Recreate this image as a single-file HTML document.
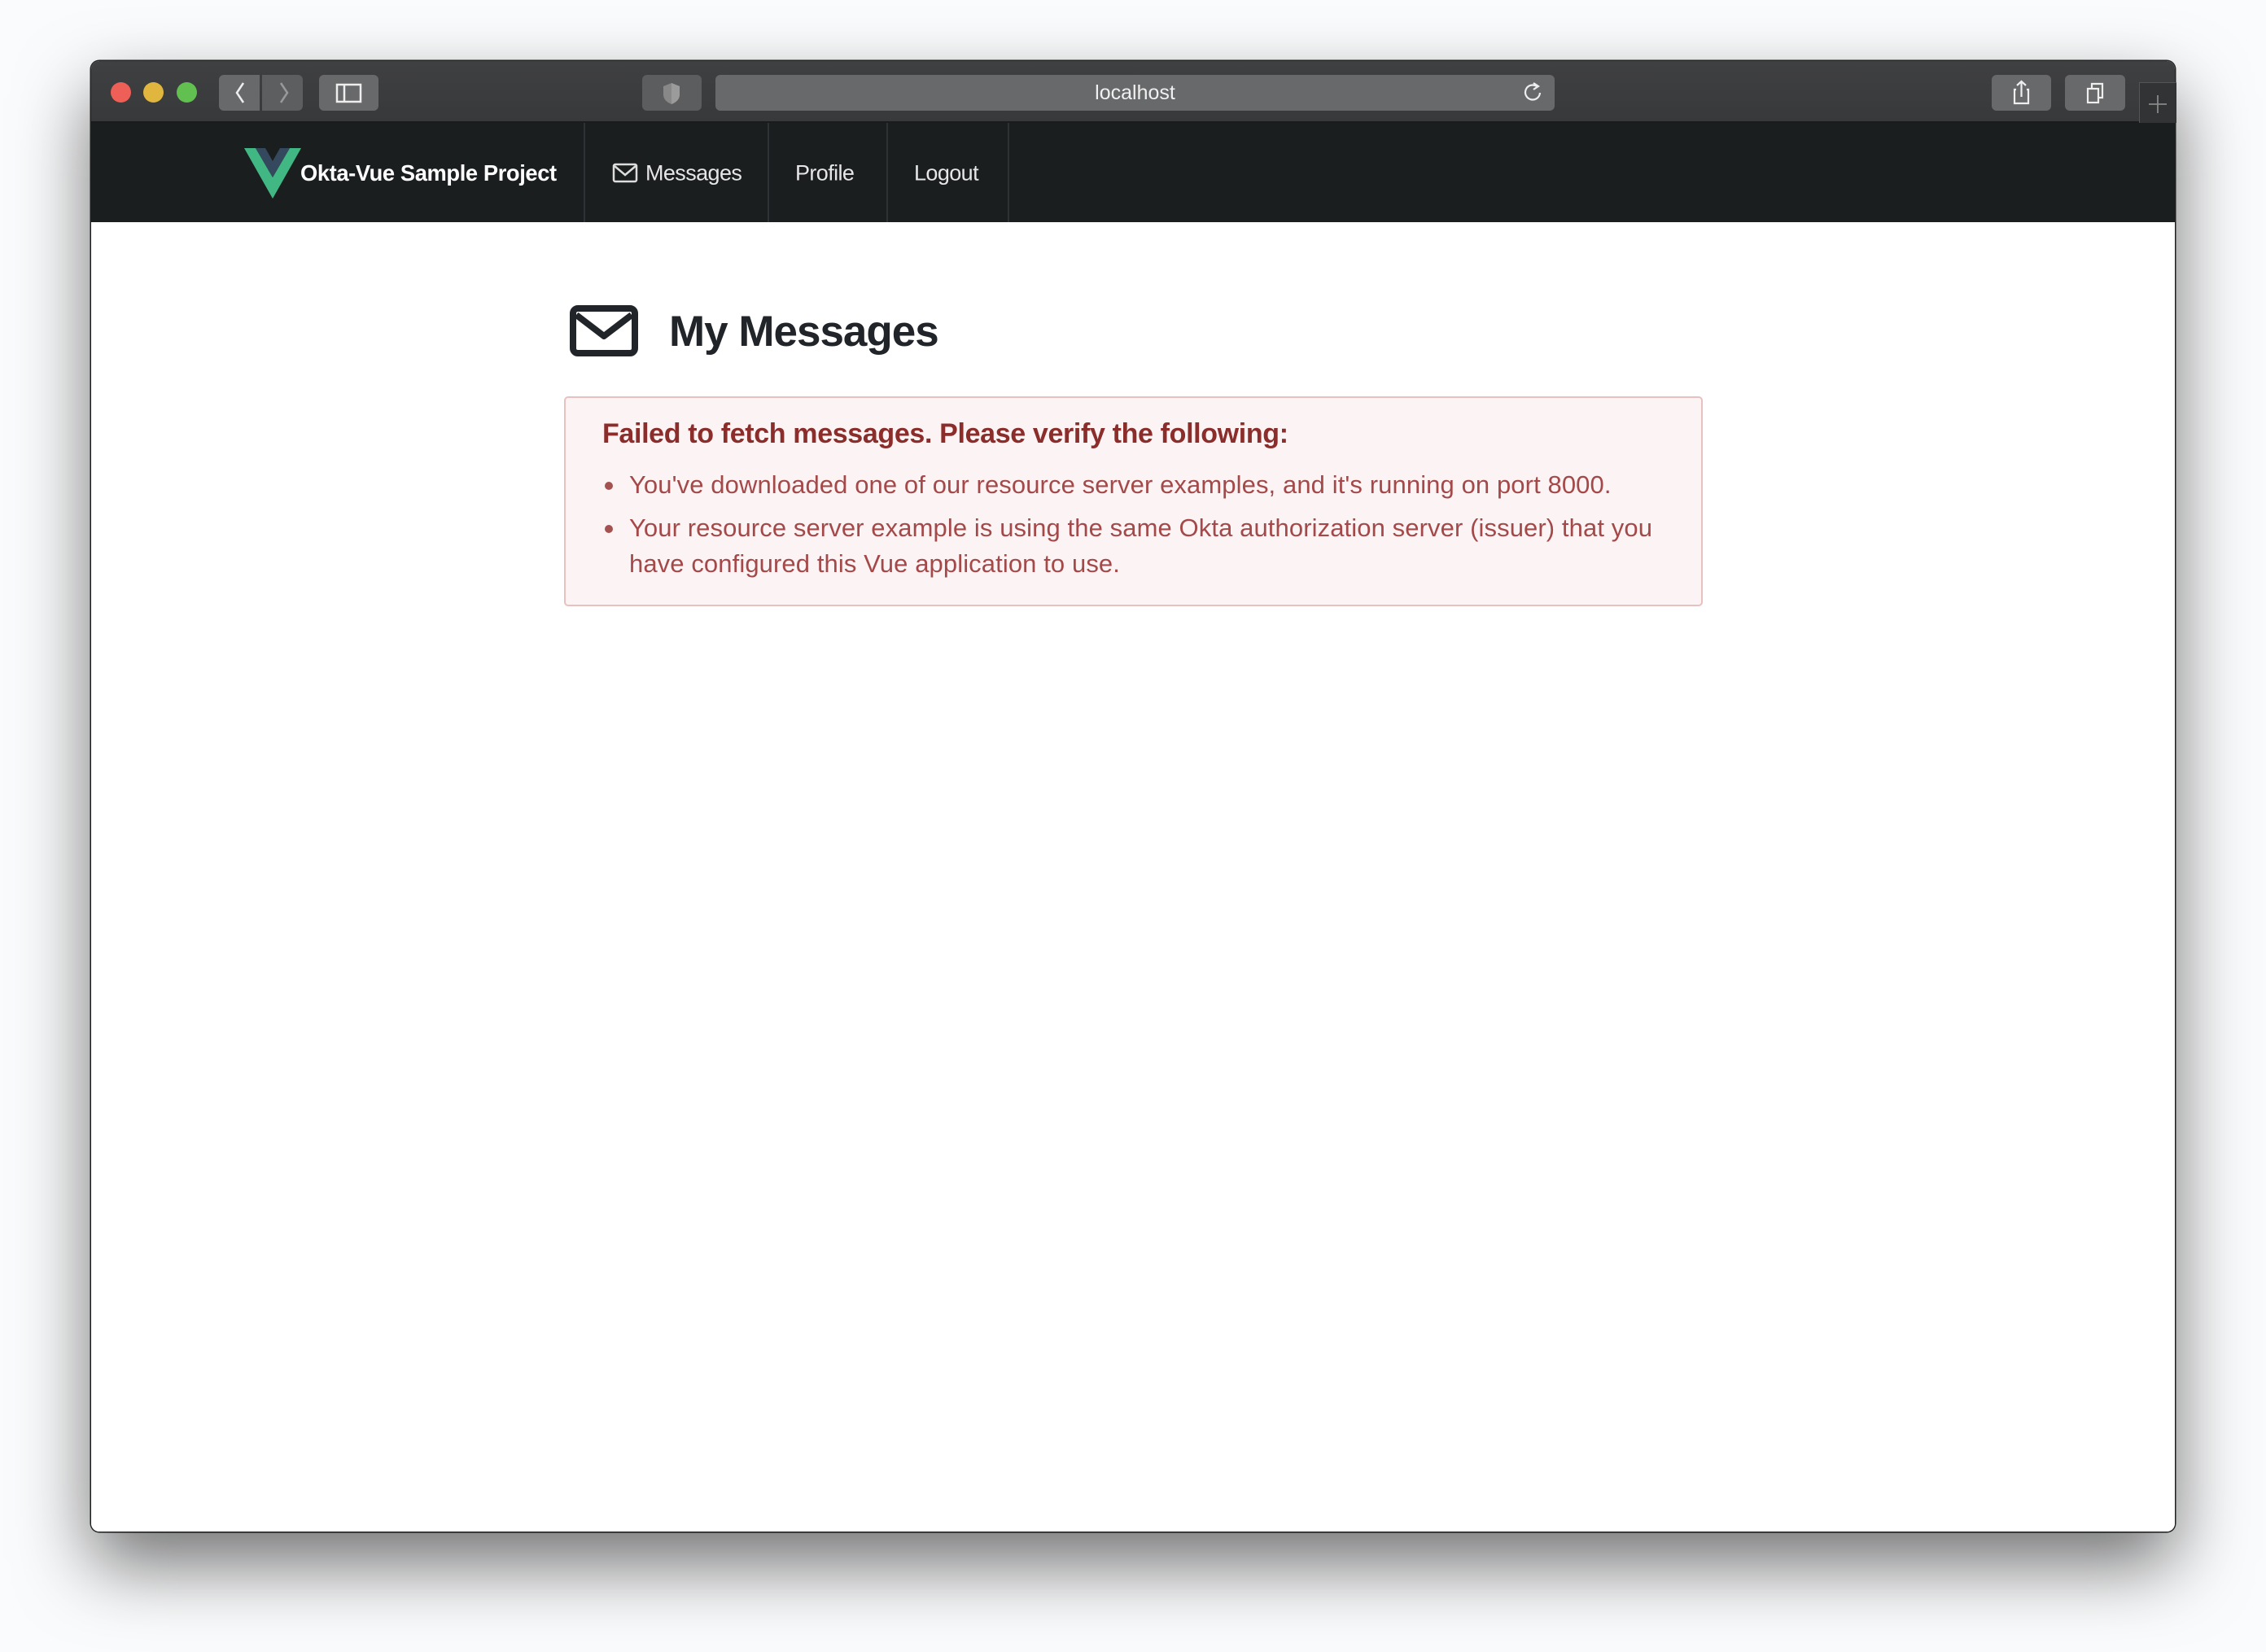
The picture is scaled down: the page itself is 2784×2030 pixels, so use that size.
<!DOCTYPE html>
<html><head><meta charset="utf-8"><style>
*{box-sizing:border-box;margin:0;padding:0}
body{width:2784px;height:2030px;background:#fafbfc;position:relative;overflow:hidden;font-family:"Liberation Sans",sans-serif}
.win{position:absolute;left:112px;top:75px;width:2560px;height:1807px;background:#fff;border-radius:10px;overflow:hidden;box-shadow:0 40px 90px rgba(0,0,0,.55),0 0 0 1.5px #2a2a2a;}
.tb{position:absolute;left:0;top:0;width:100%;height:76px;background:linear-gradient(#3f4042,#38393b);border-bottom:2px solid #1b1b1c}
.dot{position:absolute;top:101px;width:25px;height:25px;border-radius:50%}
.btn{position:absolute;top:92px;height:44px;background:#68696a;border-radius:6px}
.nav{position:absolute;left:0;top:76px;width:100%;height:122px;background:#1b1e1f}
.sep{position:absolute;top:0;width:1.5px;height:122px;background:#2e3234}
.nt{position:absolute;color:#e6e6e6;font-size:27px;top:120px;transform:translateY(-50%);letter-spacing:-0.6px;white-space:nowrap}
.b{position:absolute;left:-30px;top:18px;width:10px;height:10px;border-radius:50%;background:#a45250}
</style></head><body>
<div class="win">
<div class="tb"></div>
<div class="nav">
<div class="sep" style="left:605px"></div><div class="sep" style="left:831px"></div><div class="sep" style="left:977px"></div><div class="sep" style="left:1126px"></div>
</div>
<div style="position:absolute;left:0;top:198px;width:100%;height:1609px;background:#fff"></div>
</div>
<div class="dot" style="left:136px;background:#ed5f57"></div>
<div class="dot" style="left:176px;background:#e0b63f"></div>
<div class="dot" style="left:217px;background:#62c050"></div>
<div class="btn" style="left:269px;width:50px;border-radius:6px 0 0 6px"></div>
<div class="btn" style="left:322px;width:50px;border-radius:0 6px 6px 0;background:#5d5e60"></div>
<svg style="position:absolute;left:269px;top:92px" width="110" height="44"><path d="M30 10 L22 22 L30 34" stroke="#eee" stroke-width="2.5" fill="none"/><path d="M76 10 L84 22 L76 34" stroke="#999" stroke-width="2.5" fill="none"/></svg>
<div class="btn" style="left:392px;width:73px"></div>
<svg style="position:absolute;left:392px;top:92px" width="73" height="44"><rect x="22" y="12" width="29" height="21" fill="none" stroke="#eee" stroke-width="2.5"/><line x1="31" y1="12" x2="31" y2="33" stroke="#eee" stroke-width="2.5"/></svg>
<div class="btn" style="left:789px;width:73px;background:#5c5d5f"></div>
<svg style="position:absolute;left:789px;top:92px" width="73" height="44"><path d="M36 10 L46 14 L46 24 Q46 32 36 36 Q26 32 26 24 L26 14 Z" fill="#888"/><path d="M36 10 L46 14 L46 24 Q46 32 36 36 Z" fill="#9b9b9b"/></svg>
<div class="btn" style="left:879px;width:1031px"></div>
<div style="position:absolute;left:879px;width:1031px;top:92px;height:44px;line-height:44px;text-align:center;color:#f0f0f0;font-size:25px">localhost</div>
<svg style="position:absolute;left:1866px;top:96px" width="36" height="36"><path d="M22 10 A9 9 0 1 0 26 18" fill="none" stroke="#eee" stroke-width="2.2"/><path d="M18 6 L24 10 L18 14" fill="none" stroke="#eee" stroke-width="2.2"/></svg>
<div class="btn" style="left:2447px;width:73px"></div>
<svg style="position:absolute;left:2447px;top:92px" width="73" height="44"><path d="M30 18 H28 V35 H45 V18 H43" fill="none" stroke="#eee" stroke-width="2.2"/><path d="M36.5 27 V8 M31 13 L36.5 8 L42 13" fill="none" stroke="#eee" stroke-width="2.2"/></svg>
<div class="btn" style="left:2537px;width:74px"></div>
<svg style="position:absolute;left:2537px;top:92px" width="74" height="44"><rect x="28" y="17" width="13" height="17" fill="none" stroke="#eee" stroke-width="2.2"/><path d="M33 17 V11 H46 V28 H41" fill="none" stroke="#eee" stroke-width="2.2"/></svg>
<div style="position:absolute;left:2628px;top:101px;width:46px;height:50px;background:#323335;border-left:1.5px solid #555;border-top:1.5px solid #555"></div>
<svg style="position:absolute;left:2628px;top:101px" width="46" height="50"><path d="M23 16 V38 M12 27 H34" stroke="#888" stroke-width="1.8"/></svg>
<svg style="position:absolute;left:300px;top:182px" width="70" height="62" viewBox="0 0 70 62"><path d="M0 0 H14 L35 36 L56 0 H70 L35 62 Z" fill="#41b883"/><path d="M14 0 H26 L35 16 L44 0 H56 L35 36 Z" fill="#35495e"/></svg>
<div class="nt" style="left:369px;top:213px;font-weight:bold;color:#fff;transform:translateY(-50%) scaleX(0.975);transform-origin:left center;font-size:28px;letter-spacing:-0.4px">Okta-Vue Sample Project</div>
<svg style="position:absolute;left:752px;top:200px" width="34" height="26"><rect x="2" y="2" width="28" height="21" rx="2" fill="none" stroke="#ddd" stroke-width="2.5"/><path d="M3 4 L16 15 L29 4" fill="none" stroke="#ddd" stroke-width="2.5"/></svg>
<div class="nt" style="left:793px;top:213px">Messages</div>
<div class="nt" style="left:977px;top:213px">Profile</div>
<div class="nt" style="left:1123px;top:213px">Logout</div>
<svg style="position:absolute;left:700px;top:375px" width="84" height="63" viewBox="0 0 84 63"><rect x="4" y="4" width="76" height="55" rx="6" fill="none" stroke="#212529" stroke-width="8"/><path d="M8 12 L42 38 L76 12" fill="none" stroke="#212529" stroke-width="8" stroke-linejoin="round"/></svg>
<div style="position:absolute;left:822px;top:377px;font-size:53px;font-weight:bold;color:#212529;letter-spacing:-1px;white-space:nowrap">My Messages</div>
<div style="position:absolute;left:693px;top:487px;width:1399px;height:258px;background:#fcf4f4;border:2px solid #e8c0c0;border-radius:5px"></div>
<div style="position:absolute;left:740px;top:514px;font-size:34px;font-weight:bold;color:#8a2d2b;letter-spacing:-0.35px;white-space:nowrap">Failed to fetch messages. Please verify the following:</div>
<div style="position:absolute;left:773px;top:574px;width:1300px;font-size:31px;color:#a4494a;line-height:44px;letter-spacing:0.1px;white-space:nowrap">
<div style="position:relative;margin-bottom:9px"><span class="b"></span>You've downloaded one of our resource server examples, and it's running on port 8000.</div>
<div style="position:relative"><span class="b"></span>Your resource server example is using the same Okta authorization server (issuer) that you<br>have configured this Vue application to use.</div>
</div>
</body></html>
